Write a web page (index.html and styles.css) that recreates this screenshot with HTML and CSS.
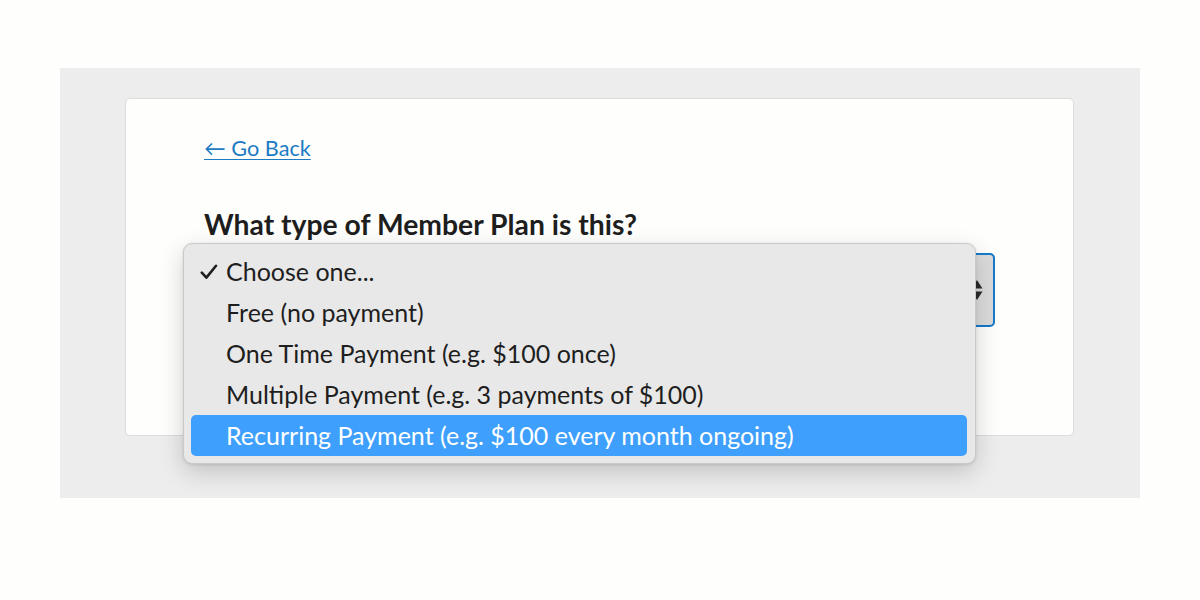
FILE: index.html
```html
<!DOCTYPE html>
<html>
<head>
<meta charset="utf-8">
<link rel="stylesheet" href="styles.css">
</head>
<body>
<div class="panel">
  <div class="card">
    <a class="back" href="#">← Go Back</a>
    <h2 class="question">What type of Member Plan is this?</h2>
    <div class="select">
      <span class="arrows">
        <svg width="12" height="22" viewBox="0 0 12 22"><path d="M6 1 L11.5 9.5 H0.5 Z" fill="#2a2a2a"/><path d="M6 21 L11.5 12.5 H0.5 Z" fill="#2a2a2a"/></svg>
      </span>
      <ul class="menu">
        <li class="opt checked"><svg class="tick" width="18" height="16" viewBox="0 0 18 16"><path d="M1.8 8.6 L6.4 13.6 L16 1.8" fill="none" stroke="#1e1e1e" stroke-width="2.6" stroke-linecap="round" stroke-linejoin="round"/></svg>Choose one...</li>
        <li class="opt">Free (no payment)</li>
        <li class="opt">One Time Payment (e.g. $100 once)</li>
        <li class="opt">Multiple Payment (e.g. 3 payments of $100)</li>
        <li class="opt active">Recurring Payment (e.g. $100 every month ongoing)</li>
      </ul>
    </div>
  </div>
</div>
</body>
</html>
```

FILE: styles.css
```css
html, body {
  margin: 0;
  padding: 0;
  background: #fefefd;
  font-family: Lato, "Open Sans", sans-serif;
}
.panel {
  margin: 68px 60px 0;
  height: 430px;
  background: #ededed;
  padding: 30px 66px 0 65px;
  box-sizing: border-box;
}
.card {
  background: #fefefd;
  border: 1px solid #dcdcdc;
  border-radius: 5px;
  height: 338px;
  box-sizing: border-box;
  padding: 36px 78px 0 78px;
  display: flex;
  flex-direction: column;
  align-items: flex-start;
}
.back {
  color: #1d7bc4;
  font-size: 21.7px;
  line-height: 26px;
  text-decoration: underline;
  text-underline-offset: 3px;
  text-decoration-thickness: 1px;
}
.question {
  margin: 46px 0 0;
  font-size: 28.3px;
  line-height: 34px;
  font-weight: 700;
  color: #1e1e1e;
}
.select {
  position: relative;
  margin-top: 12px;
  align-self: stretch;
  height: 74px;
  box-sizing: border-box;
  border: 2px solid #1679cb;
  border-radius: 5px;
  background: linear-gradient(90deg, #ececec, #e6e6e6 90%, #dadada);
  display: flex;
  align-items: center;
  justify-content: flex-end;
  padding-right: 10px;
}
.arrows {
  display: flex;
}
.menu {
  position: absolute;
  left: -23px;
  top: -12px;
  width: 793px;
  margin: 0;
  padding: 7px 8px 7px 7px;
  box-sizing: border-box;
  list-style: none;
  background: #e8e8e8;
  border: 1px solid #c9c9c9;
  border-radius: 9px;
  box-shadow: 0 8px 24px rgba(0,0,0,0.18), 0 1px 3px rgba(0,0,0,0.1);
}
.opt {
  position: relative;
  height: 41px;
  line-height: 41px;
  padding-left: 35px;
  font-size: 25px;
  color: #1e1e1e;
  border-radius: 5px;
}
.tick {
  position: absolute;
  left: 9px;
  top: 13px;
}
.opt.active {
  background: #3f9ffd;
  color: #fff;
}
```
